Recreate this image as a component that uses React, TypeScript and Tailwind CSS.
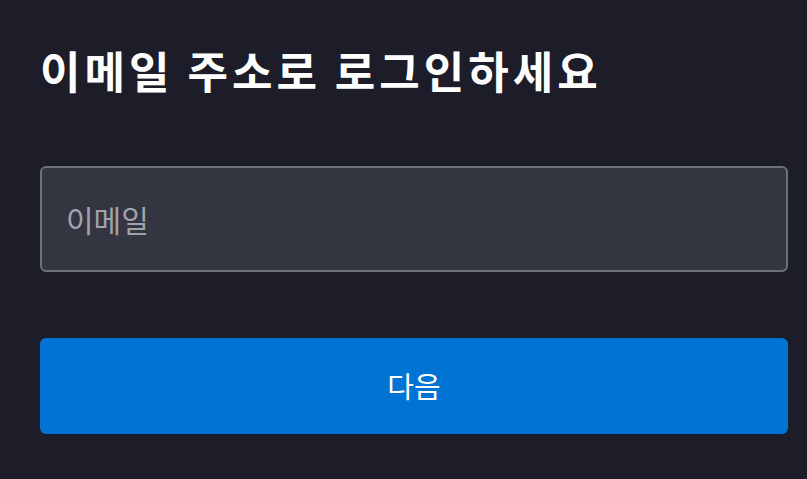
const App = () => {
  return (
    <div
      className="min-h-screen w-full bg-[#1c1d29] pl-10 pt-[38px]"
      style={{ fontFamily: '"Noto Sans CJK KR", "Noto Sans", sans-serif' }}
    >
      <div className="w-[748px]">
        <h1 className="text-[44px] font-semibold leading-[64px] tracking-[4px] text-white">
          이메일 주소로 로그인하세요
        </h1>
        <div className="mt-[64px] flex h-[106px] items-center rounded-md border-2 border-[#6e707b] bg-[#333541] px-[24px]">
          <input
            placeholder="이메일"
            className="w-full bg-transparent text-[30px] text-white outline-none placeholder:text-[#a1a3ab]"
          />
        </div>
        <button className="mt-[66px] flex h-[96px] w-full items-center justify-center rounded-md bg-[#0074d4] text-[29px] text-white">
          다음
        </button>
      </div>
    </div>
  );
};

export default App;
